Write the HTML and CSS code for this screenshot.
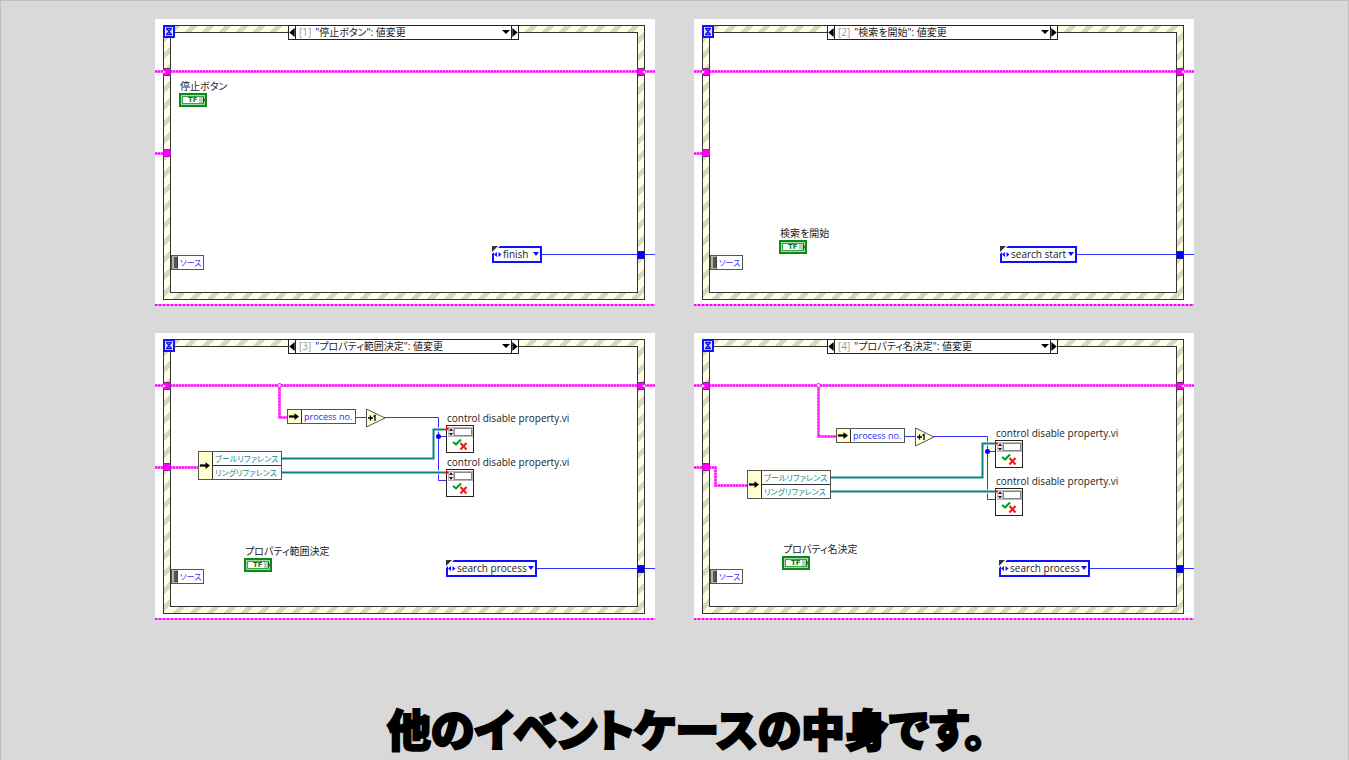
FILE: index.html
```html
<!DOCTYPE html>
<html lang="ja">
<head>
<meta charset="utf-8">
<meta name="viewport" content="width=device-width, initial-scale=1">
<title>他のイベントケースの中身です。</title>
<link rel="stylesheet" href="styles.css">
</head>
<body>
<svg class="defs" aria-hidden="true">
  <symbol id="hourglass" viewBox="0 0 12 13">
    <rect width="12" height="13" fill="#1414ee"/>
    <rect x="2" y="2" width="8" height="9" fill="#dcdcff"/>
    <path d="M3 3.500h6M3 9.500h6M4 4l4 5M8 4l-4 5" stroke="#1414ee" stroke-width="1.300" fill="none"/>
  </symbol>
  <symbol id="boolean" viewBox="0 0 28 14">
    <rect width="28" height="14" fill="#0b8a1c"/>
    <rect x="2" y="2" width="24" height="10" fill="#a9d8ab"/>
    <rect x="3" y="3" width="22" height="8" fill="#3fa04a"/>
    <rect x="4" y="4" width="16" height="6" fill="#fff"/>
    <rect x="20" y="4" width="4" height="6" fill="#b5d2b5"/>
    <path d="M24 3.500l2 3.500-2 3.500z" fill="#34443a"/>
  </symbol>
  <symbol id="subvi" viewBox="0 0 28 28">
    <rect x="0.500" y="0.500" width="27" height="27" fill="#fff" stroke="#222"/>
    <rect x="2" y="2" width="25" height="10" fill="#b9b9b9"/>
    <rect x="3" y="3" width="4" height="8" fill="#eee"/>
    <rect x="8.500" y="3.500" width="17" height="7" fill="#fff" stroke="#888"/>
    <path d="M3 6l2-3 2 3zM3 8l2 3 2-3z" fill="#222"/>
    <path d="M0 1l3 2.500-3 2.500z" fill="#f00"/>
    <path d="M7 17l3 2.500 5-5" fill="none" stroke="#009a10" stroke-width="2"/>
    <path d="M14.500 18l6 6.500M20.500 18l-6 6.500" fill="none" stroke="#f01818" stroke-width="2"/>
  </symbol>
  <symbol id="unbundle" viewBox="0 0 10 8">
    <path d="M0 4h6" stroke="#000" stroke-width="2"/>
    <path d="M5 1l4 3-4 3z"/>
  </symbol>
  <symbol id="increment" viewBox="0 0 20 20">
    <path d="M0.500 1l18.500 9-18.500 9z" fill="#ffffd8" stroke="#555"/>
    <path d="M2 10h5M4.500 7.500v5M7.500 8.500L9 7.500v5.500" fill="none" stroke="#000" stroke-width="1.300"/>
  </symbol>
  <symbol id="constant-mark" viewBox="0 0 10 14">
    <path d="M0 0h8L0 8z" fill="#fff"/>
    <path d="M0 0h6L0 6z" fill="#333"/>
    <path d="M5 6v5L2 8.500zM6.500 6v5l3-2.500z" fill="#1010ff"/>
  </symbol>
  <symbol id="tunnel-in" viewBox="0 0 8 8">
    <rect x="0.500" y="0.500" width="7" height="7" fill="#f0f" stroke="#733073"/>
    <path d="M0 2.500l3 1.500-3 1.500z" fill="#ffe"/>
  </symbol>
  <symbol id="tunnel" viewBox="0 0 8 8">
    <rect x="0.500" y="0.500" width="7" height="7" fill="#f0f" stroke="#a020a0"/>
  </symbol>
</svg>

<main class="slide">
  <section class="cases">

    <article class="case case-stop">
      <div class="frame"><div class="frame-inner"></div></div>
      <svg class="wires" aria-hidden="true">
        <path class="cluster" d="M0 52.500H500M0 134.500H8"/>
        <path class="cluster-dash" d="M0 52.500H500M0 134.500H8"/>
        <path class="enum" d="M387 235.500H500"/>
        <use href="#tunnel-in" x="8" y="49" width="8" height="8"/>
        <use href="#tunnel" x="8" y="130" width="8" height="8"/>
      </svg>
      <svg class="out-tunnels" viewBox="0 0 8 194" aria-hidden="true"><rect x="0.500" y="0.500" width="7" height="7" fill="#f0f" stroke="#733073"/><path d="M8 2.500L5 4l3 1.500z" fill="#ffe"/><rect x="0.500" y="183.500" width="7" height="7" fill="#00f" stroke="#222280"/></svg>
      <svg class="hourglass" aria-hidden="true"><use href="#hourglass"/></svg>
      <div class="selector">
        <button type="button" aria-label="前のケース"><svg viewBox="0 0 6 10"><path d="M6 0v10L0 5z"/></svg></button>
        <div class="pick"><span class="num">[1]</span><select aria-label="イベントケース"><option>"停止ボタン": 値変更</option></select></div>
        <button type="button" aria-label="次のケース"><svg viewBox="0 0 6 10"><path d="M0 0v10l6-5z"/></svg></button>
      </div>
      <div class="terminal"><span class="label">停止ボタン</span><span class="tf"><svg aria-hidden="true"><use href="#boolean"/></svg><b>TF</b></span></div>
      <div class="source"><i></i><span>ソース</span></div>
      <div class="constant"><svg aria-hidden="true"><use href="#constant-mark"/></svg><select aria-label="列挙体定数"><option>finish</option></select></div>
    </article>

    <article class="case case-search">
      <div class="frame"><div class="frame-inner"></div></div>
      <svg class="wires" aria-hidden="true">
        <path class="cluster" d="M0 52.500H500M0 134.500H8"/>
        <path class="cluster-dash" d="M0 52.500H500M0 134.500H8"/>
        <path class="enum" d="M383 235.500H500"/>
        <use href="#tunnel-in" x="8" y="49" width="8" height="8"/>
        <use href="#tunnel" x="8" y="130" width="8" height="8"/>
      </svg>
      <svg class="out-tunnels" viewBox="0 0 8 194" aria-hidden="true"><rect x="0.500" y="0.500" width="7" height="7" fill="#f0f" stroke="#733073"/><path d="M8 2.500L5 4l3 1.500z" fill="#ffe"/><rect x="0.500" y="183.500" width="7" height="7" fill="#00f" stroke="#222280"/></svg>
      <svg class="hourglass" aria-hidden="true"><use href="#hourglass"/></svg>
      <div class="selector">
        <button type="button" aria-label="前のケース"><svg viewBox="0 0 6 10"><path d="M6 0v10L0 5z"/></svg></button>
        <div class="pick"><span class="num">[2]</span><select aria-label="イベントケース"><option>"検索を開始": 値変更</option></select></div>
        <button type="button" aria-label="次のケース"><svg viewBox="0 0 6 10"><path d="M0 0v10l6-5z"/></svg></button>
      </div>
      <div class="terminal"><span class="label">検索を開始</span><span class="tf"><svg aria-hidden="true"><use href="#boolean"/></svg><b>TF</b></span></div>
      <div class="source"><i></i><span>ソース</span></div>
      <div class="constant"><svg aria-hidden="true"><use href="#constant-mark"/></svg><select aria-label="列挙体定数"><option>search start</option></select></div>
    </article>

    <article class="case case-range">
      <div class="frame"><div class="frame-inner"></div></div>
      <svg class="wires" aria-hidden="true">
        <path class="cluster" d="M0 52.500H500M0 134.500H43M124.500 52.500V84.500H133"/>
        <path class="cluster-dash" d="M0 52.500H500M0 134.500H43M124.500 52.500V84.500H133"/>
        <circle cx="124.500" cy="52.500" r="2" fill="#fff" stroke="#f0f"/>
        <path class="enum" d="M200 84.500H212M229 84.500H283.500V147.500H291M283.500 103.500H291M382 235.500H500"/>
        <circle cx="283.500" cy="103.500" r="2.500" fill="#00f"/>
        <path class="ref-gap" d="M270 125.500H278.500V96.500H291M270 139.500H291"/>
        <path class="ref" d="M126 125.500H278.500V96.500H291M126 139.500H291"/>
        <use href="#tunnel-in" x="8" y="49" width="8" height="8"/>
        <use href="#tunnel" x="8" y="130" width="8" height="8"/>
        <use href="#increment" x="211" y="75" width="20" height="20"/>
      </svg>
      <svg class="out-tunnels" viewBox="0 0 8 194" aria-hidden="true"><rect x="0.500" y="0.500" width="7" height="7" fill="#f0f" stroke="#733073"/><path d="M8 2.500L5 4l3 1.500z" fill="#ffe"/><rect x="0.500" y="183.500" width="7" height="7" fill="#00f" stroke="#222280"/></svg>
      <svg class="hourglass" aria-hidden="true"><use href="#hourglass"/></svg>
      <div class="selector">
        <button type="button" aria-label="前のケース"><svg viewBox="0 0 6 10"><path d="M6 0v10L0 5z"/></svg></button>
        <div class="pick"><span class="num">[3]</span><select aria-label="イベントケース"><option>"プロパティ範囲決定": 値変更</option></select></div>
        <button type="button" aria-label="次のケース"><svg viewBox="0 0 6 10"><path d="M0 0v10l6-5z"/></svg></button>
      </div>
      <div class="node process"><svg aria-hidden="true"><use href="#unbundle"/></svg><ul><li>process no.</li></ul></div>
      <div class="node refs"><svg aria-hidden="true"><use href="#unbundle"/></svg><ul><li>ブールリファレンス</li><li>リングリファレンス</li></ul></div>
      <div class="subvi first"><span>control disable property.vi</span><svg aria-hidden="true"><use href="#subvi"/></svg></div>
      <div class="subvi second"><span>control disable property.vi</span><svg aria-hidden="true"><use href="#subvi"/></svg></div>
      <div class="terminal"><span class="label">プロパティ範囲決定</span><span class="tf"><svg aria-hidden="true"><use href="#boolean"/></svg><b>TF</b></span></div>
      <div class="source"><i></i><span>ソース</span></div>
      <div class="constant"><svg aria-hidden="true"><use href="#constant-mark"/></svg><select aria-label="列挙体定数"><option>search process</option></select></div>
    </article>

    <article class="case case-name">
      <div class="frame"><div class="frame-inner"></div></div>
      <svg class="wires" aria-hidden="true">
        <path class="cluster" d="M0 52.500H500M0 134.500H21.500V152.500H53M124.500 52.500V103.500H143"/>
        <path class="cluster-dash" d="M0 52.500H500M0 134.500H21.500V152.500H53M124.500 52.500V103.500H143"/>
        <circle cx="124.500" cy="52.500" r="2" fill="#fff" stroke="#f0f"/>
        <path class="enum" d="M210 103.500H222M239 103.500H293.500V166.500H301M293.500 118.500H301M396 235.500H500"/>
        <circle cx="293.500" cy="118.500" r="2.500" fill="#00f"/>
        <path class="ref-gap" d="M280 144.500H288.500V110.500H301M280 158.500H301"/>
        <path class="ref" d="M136 144.500H288.500V110.500H301M136 158.500H301"/>
        <use href="#tunnel-in" x="8" y="49" width="8" height="8"/>
        <use href="#tunnel" x="8" y="130" width="8" height="8"/>
        <use href="#increment" x="221" y="94" width="20" height="20"/>
      </svg>
      <svg class="out-tunnels" viewBox="0 0 8 194" aria-hidden="true"><rect x="0.500" y="0.500" width="7" height="7" fill="#f0f" stroke="#733073"/><path d="M8 2.500L5 4l3 1.500z" fill="#ffe"/><rect x="0.500" y="183.500" width="7" height="7" fill="#00f" stroke="#222280"/></svg>
      <svg class="hourglass" aria-hidden="true"><use href="#hourglass"/></svg>
      <div class="selector">
        <button type="button" aria-label="前のケース"><svg viewBox="0 0 6 10"><path d="M6 0v10L0 5z"/></svg></button>
        <div class="pick"><span class="num">[4]</span><select aria-label="イベントケース"><option>"プロパティ名決定": 値変更</option></select></div>
        <button type="button" aria-label="次のケース"><svg viewBox="0 0 6 10"><path d="M0 0v10l6-5z"/></svg></button>
      </div>
      <div class="node process"><svg aria-hidden="true"><use href="#unbundle"/></svg><ul><li>process no.</li></ul></div>
      <div class="node refs"><svg aria-hidden="true"><use href="#unbundle"/></svg><ul><li>ブールリファレンス</li><li>リングリファレンス</li></ul></div>
      <div class="subvi first"><span>control disable property.vi</span><svg aria-hidden="true"><use href="#subvi"/></svg></div>
      <div class="subvi second"><span>control disable property.vi</span><svg aria-hidden="true"><use href="#subvi"/></svg></div>
      <div class="terminal"><span class="label">プロパティ名決定</span><span class="tf"><svg aria-hidden="true"><use href="#boolean"/></svg><b>TF</b></span></div>
      <div class="source"><i></i><span>ソース</span></div>
      <div class="constant"><svg aria-hidden="true"><use href="#constant-mark"/></svg><select aria-label="列挙体定数"><option>search process</option></select></div>
    </article>

  </section>
  <p class="caption">他のイベントケースの中身です。</p>
</main>
</body>
</html>
```
FILE: styles.css
```css
* { box-sizing: border-box; }

body {
  margin: 0;
  background: #d9d9d9;
  color: #222;
  font: 10px/14px "Open Sans", "Noto Sans CJK JP", sans-serif;
  font-feature-settings: "palt";
}

.defs { position: absolute; width: 0; height: 0; }

.slide {
  min-height: 100vh;
  border: 1px solid #bfbfbf;
  padding: 18px 0 0;
}

.cases {
  display: grid;
  grid-template-columns: repeat(auto-fit, 500px);
  justify-content: center;
  gap: 27px 39px;
}

/* One block diagram: a free canvas of frame, wires and nodes */
.case {
  position: relative;
  height: 287px;
  background: #fff;
}
.case::after {
  content: "";
  position: absolute;
  inset: auto 0 0;
  height: 2px;
  background: repeating-linear-gradient(90deg, #f0f 0 2px, #ff70ff 2px 4px);
}

.frame {
  position: absolute;
  inset: 6px 10px 6px 8px;
  padding: 6px;
  border: 1px solid #333;
  background: repeating-linear-gradient(135deg, #ffffe6 0 7px, #d8d8c0 7px 12px);
}
.frame-inner {
  height: 100%;
  border: 1px solid #333;
  background: #fff;
}

.wires { position: absolute; inset: 0; width: 100%; height: 100%; fill: none; }
.cluster { stroke: #ff80ff; stroke-width: 3; }
.cluster-dash { stroke: #f0f; stroke-width: 2; stroke-dasharray: 2 1; }
.enum { stroke: #3232ff; stroke-width: 1; }
.ref-gap { stroke: #fff; stroke-width: 4; }
.ref { stroke: #0e8080; stroke-width: 2; }

.out-tunnels { position: absolute; right: 10px; top: 49px; width: 8px; height: 194px; }
.hourglass { position: absolute; left: 8px; top: 6px; width: 12px; height: 13px; }

.selector {
  position: absolute;
  left: 133px;
  top: 6px;
  display: flex;
  width: 231px;
  height: 15px;
  border: 1px solid #222;
  background: #fff;
}
.selector button {
  display: flex;
  align-items: center;
  justify-content: center;
  width: 6px;
  padding: 0;
  border: 0;
  background: #fff;
}
.selector button svg { width: 6px; height: 9px; }
.pick {
  position: relative;
  display: flex;
  flex: 1;
  align-items: center;
  gap: 4px;
  padding-left: 3px;
  border: solid #222;
  border-width: 0 1px;
  line-height: 13px;
}
.num { color: #999; }

select {
  appearance: none;
  flex: 1;
  min-width: 0;
  margin: 0;
  padding: 0;
  border: 0;
  background: transparent;
  color: #222;
  font: inherit;
  font-feature-settings: inherit;
}
.pick::after, .constant::after {
  content: "";
  position: absolute;
  right: 1px;
  top: 4px;
  border: solid transparent;
  border-width: 4px 4px 0;
  border-top-color: #000;
}

.terminal, .subvi { position: absolute; display: grid; justify-items: start; }
.label { padding-left: 1px; }
.tf { position: relative; width: 28px; height: 14px; }
.tf svg { display: block; width: 28px; height: 14px; }
.tf b {
  position: absolute;
  inset: 1px 3px 0 9px;
  color: #0b7a1c;
  font: bold 7px/13px "DejaVu Sans", sans-serif;
}

.source {
  position: absolute;
  left: 16px;
  top: 236px;
  display: flex;
  width: 33px;
  height: 15px;
  border: 1px solid #55554c;
  background: #fff;
  color: #3232ff;
  font-size: 8px;
  line-height: 13px;
}
.source i {
  flex: none;
  width: 6px;
  border: solid #b5b5a0;
  border-width: 1px 2px;
  border-right: 1px solid #444;
  background: #555;
}
.source span { padding-left: 2px; white-space: nowrap; }

.constant {
  position: absolute;
  top: 227px;
  display: flex;
  height: 17px;
  padding-left: 9px;
  border: 2px solid #1010ff;
  background: #fff;
}
.constant select { line-height: 13px; }
.constant svg {
  position: absolute;
  left: -2px;
  top: -2px;
  width: 10px;
  height: 14px;
}
.constant::after {
  border-width: 4px 3px 0;
  border-top-color: #1010ff;
}

.node {
  position: absolute;
  display: flex;
  border: 1px solid #55554c;
  background: #ffffd0;
  font-size: 9px;
}
.node > svg { flex: none; align-self: center; width: 13px; height: 9px; }
.node ul {
  flex: 1;
  margin: 0;
  padding: 0;
  border-left: 1px solid #333;
  background: #fff;
  list-style: none;
}
.node li { padding-left: 2px; line-height: 13px; white-space: nowrap; }
.node li + li { border-top: 1px solid #333; }
.process { width: 69px; color: #2a2af0; }
.refs { width: 84px; color: #168a8a; font-size: 8px; }

.subvi > span { padding-left: 1px; white-space: nowrap; }
.subvi > svg { width: 28px; height: 28px; }

.case-stop .terminal { left: 24px; top: 60px; }
.case-stop .constant { left: 337px; width: 50px; }

.case-search .terminal { left: 85px; top: 207px; }
.case-search .constant { left: 306px; width: 77px; }

.case-range .process { left: 132px; top: 76px; }
.case-range .refs { left: 43px; top: 118px; }
.case-range .first { left: 291px; top: 78px; }
.case-range .second { left: 291px; top: 122px; }
.case-range .terminal { left: 89px; top: 211px; }
.case-range .constant { left: 291px; width: 91px; }

.case-name .process { left: 142px; top: 95px; }
.case-name .refs { left: 53px; top: 137px; }
.case-name .first { left: 301px; top: 93px; }
.case-name .second { left: 301px; top: 141px; }
.case-name .terminal { left: 88px; top: 209px; }
.case-name .constant { left: 305px; width: 91px; }

.caption {
  margin: 76px 0 0;
  padding-left: 24px;
  color: #000;
  font: 900 44px/64px "Noto Sans CJK JP", sans-serif;
  font-feature-settings: "palt";
  text-align: center;
  -webkit-text-stroke: 2px #000;
}
```
